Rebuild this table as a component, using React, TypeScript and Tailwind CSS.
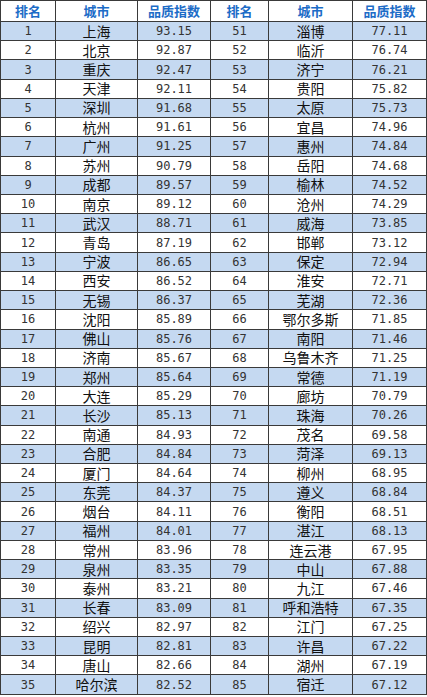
const left: [number, string, string][] = [
  [1, '上海', '93.15'], [2, '北京', '92.87'], [3, '重庆', '92.47'], [4, '天津', '92.11'],
  [5, '深圳', '91.68'], [6, '杭州', '91.61'], [7, '广州', '91.25'], [8, '苏州', '90.79'],
  [9, '成都', '89.57'], [10, '南京', '89.12'], [11, '武汉', '88.71'], [12, '青岛', '87.19'],
  [13, '宁波', '86.65'], [14, '西安', '86.52'], [15, '无锡', '86.37'], [16, '沈阳', '85.89'],
  [17, '佛山', '85.76'], [18, '济南', '85.67'], [19, '郑州', '85.64'], [20, '大连', '85.29'],
  [21, '长沙', '85.13'], [22, '南通', '84.93'], [23, '合肥', '84.84'], [24, '厦门', '84.64'],
  [25, '东莞', '84.37'], [26, '烟台', '84.11'], [27, '福州', '84.01'], [28, '常州', '83.96'],
  [29, '泉州', '83.35'], [30, '泰州', '83.21'], [31, '长春', '83.09'], [32, '绍兴', '82.97'],
  [33, '昆明', '82.81'], [34, '唐山', '82.66'], [35, '哈尔滨', '82.52'],
];

const right: [number, string, string][] = [
  [51, '淄博', '77.11'], [52, '临沂', '76.74'], [53, '济宁', '76.21'], [54, '贵阳', '75.82'],
  [55, '太原', '75.73'], [56, '宜昌', '74.96'], [57, '惠州', '74.84'], [58, '岳阳', '74.68'],
  [59, '榆林', '74.52'], [60, '沧州', '74.29'], [61, '威海', '73.85'], [62, '邯郸', '73.12'],
  [63, '保定', '72.94'], [64, '淮安', '72.71'], [65, '芜湖', '72.36'], [66, '鄂尔多斯', '71.85'],
  [67, '南阳', '71.46'], [68, '乌鲁木齐', '71.25'], [69, '常德', '71.19'], [70, '廊坊', '70.79'],
  [71, '珠海', '70.26'], [72, '茂名', '69.58'], [73, '菏泽', '69.13'], [74, '柳州', '68.95'],
  [75, '遵义', '68.84'], [76, '衡阳', '68.51'], [77, '湛江', '68.13'], [78, '连云港', '67.95'],
  [79, '中山', '67.88'], [80, '九江', '67.46'], [81, '呼和浩特', '67.35'], [82, '江门', '67.25'],
  [83, '许昌', '67.22'], [84, '湖州', '67.19'], [85, '宿迁', '67.12'],
];

const cell = 'flex items-center justify-center border-r border-b border-[#3a3a3a]';
const num = "text-[12px] text-[#333] font-['DejaVu_Sans_Mono',monospace]";
const city = "text-[14px] text-[#111] font-['Noto_Sans_CJK_SC',sans-serif]";
const head = "h-[21px] text-[13px] font-bold text-[#1c6cc7] font-['Noto_Sans_CJK_SC',sans-serif]";

export default function App() {
  return (
    <div className="bg-white w-[427px] h-[697px]">
      <div className="grid grid-cols-[55px_82px_73px_58px_84px_74px] border-l border-t border-[#3a3a3a] w-[427px]">
        {['排名', '城市', '品质指数', '排名', '城市', '品质指数'].map((h, i) => (
          <div key={i} className={`${cell} ${head}`}>{h}</div>
        ))}
        {left.map((row, i) => {
          const r = right[i];
          const bg = i % 2 === 0 ? 'bg-[#c5d9f1]' : 'bg-white';
          return [
            <div key={`a${i}`} className={`${cell} ${bg} h-[19.23px] ${num}`}>{row[0]}</div>,
            <div key={`b${i}`} className={`${cell} ${bg} h-[19.23px] ${city}`}>{row[1]}</div>,
            <div key={`c${i}`} className={`${cell} ${bg} h-[19.23px] ${num}`}>{row[2]}</div>,
            <div key={`d${i}`} className={`${cell} ${bg} h-[19.23px] ${num}`}>{r[0]}</div>,
            <div key={`e${i}`} className={`${cell} ${bg} h-[19.23px] ${city}`}>{r[1]}</div>,
            <div key={`f${i}`} className={`${cell} ${bg} h-[19.23px] ${num}`}>{r[2]}</div>,
          ];
        })}
      </div>
    </div>
  );
}
